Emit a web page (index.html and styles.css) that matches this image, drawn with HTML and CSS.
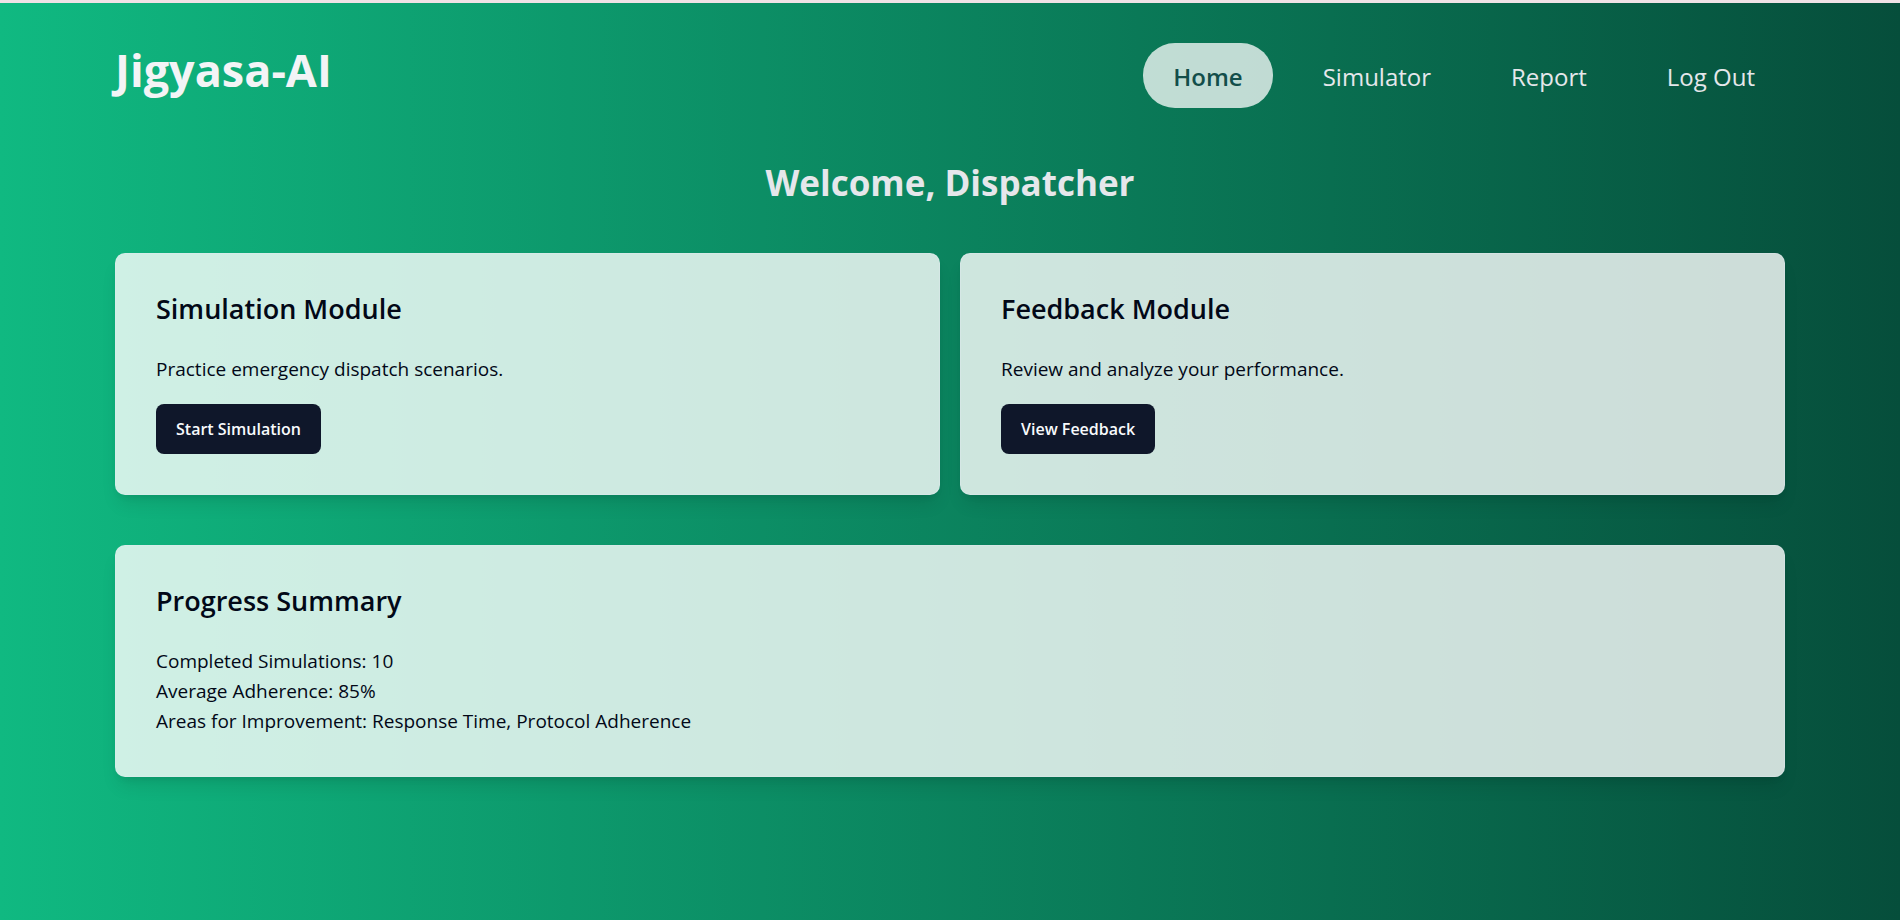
FILE: index.html
```html
<!DOCTYPE html>
<html lang="en">
<head>
<meta charset="utf-8">
<title>Jigyasa-AI</title>
<link rel="stylesheet" href="styles.css">
</head>
<body>
<div class="page">
  <header class="header">
    <h1 class="brand">Jigyasa-AI</h1>
    <nav class="nav" aria-label="Main">
      <a class="nav-link nav-link-active" href="#home" aria-current="page">Home</a>
      <a class="nav-link" href="#simulator">Simulator</a>
      <a class="nav-link" href="#report">Report</a>
      <a class="nav-link" href="#logout">Log Out</a>
    </nav>
  </header>
  <main>
    <h2 class="welcome">Welcome, Dispatcher</h2>
    <div class="modules">
      <section class="card">
        <h3 class="card-title">Simulation Module</h3>
        <p class="card-text">Practice emergency dispatch scenarios.</p>
        <button class="button" type="button">Start Simulation</button>
      </section>
      <section class="card">
        <h3 class="card-title">Feedback Module</h3>
        <p class="card-text">Review and analyze your performance.</p>
        <button class="button" type="button">View Feedback</button>
      </section>
    </div>
    <section class="card">
      <h3 class="card-title">Progress Summary</h3>
      <p class="card-text">Completed Simulations: 10</p>
      <p class="card-text">Average Adherence: 85%</p>
      <p class="card-text">Areas for Improvement: Response Time, Protocol Adherence</p>
    </section>
  </main>
</div>
</body>
</html>
```
FILE: styles.css
```css
* {
  box-sizing: border-box;
  margin: 0;
}

body {
  font-family: "Segoe UI", "Open Sans", "Noto Sans", sans-serif;
  font-size: 19px;
  line-height: 30px;
  color: #020817;
}

.page {
  min-height: 100vh;
  padding: 40px 115px;
  border-top: 3px solid #f0e2e6;
  background: linear-gradient(to right, #10b981, #064e3b) border-box;
}

.header {
  display: flex;
  justify-content: space-between;
  align-items: flex-start;
  margin-bottom: 52px;
}

.brand {
  font-size: 45px;
  line-height: 54px;
  font-weight: 700;
  color: #f3f4f6;
}

.nav {
  display: flex;
  gap: 20px;
}

.nav-link {
  padding: 16px 30px 14px;
  border-radius: 32px;
  font-size: 24px;
  line-height: 35px;
  color: #e5e7eb;
  text-decoration: none;
}

.nav-link-active {
  background: rgba(255, 255, 255, 0.75);
  color: #134e4a;
  font-weight: 600;
}

.welcome {
  margin-bottom: 48px;
  font-size: 35px;
  line-height: 45px;
  font-weight: 700;
  text-align: center;
  color: #e5e7eb;
}

.modules {
  display: grid;
  grid-template-columns: 1fr 1fr;
  gap: 20px;
  margin-bottom: 50px;
}

.card {
  padding: 40px;
  border: 1px solid rgba(226, 232, 240, 0.4);
  border-radius: 10px;
  background: rgba(255, 255, 255, 0.8);
  box-shadow: 0 12px 18px -4px rgba(0, 0, 0, 0.1), 0 5px 8px -5px rgba(0, 0, 0, 0.1);
}

.card-title {
  margin-bottom: 30px;
  font-size: 27px;
  line-height: 30px;
  font-weight: 600;
}

.button {
  margin-top: 20px;
  display: block;
  height: 50px;
  padding: 0 20px;
  border: 0;
  border-radius: 8px;
  background: #0f172a;
  color: #f8fafc;
  font-family: inherit;
  font-size: 16px;
  font-weight: 600;
}
```
